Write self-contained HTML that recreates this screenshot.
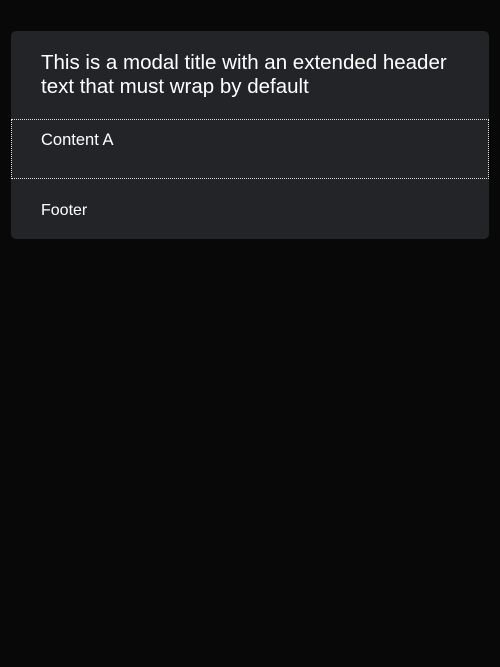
<!DOCTYPE html>
<html><head><style>
html,body{margin:0;padding:0;background:#080808;width:500px;height:667px;overflow:hidden;font-family:"Liberation Sans",sans-serif;color:#fff}
.modal{position:absolute;left:11px;top:31px;width:478px;height:208px;background:#232428;border-radius:5px;overflow:hidden}
.title{position:absolute;left:30px;top:20px;width:425px;font-size:20.5px;line-height:24px}
.content{position:absolute;left:0;top:88px;width:476px;height:58px;border:1px dotted #e0e0e0}
.content span{position:absolute;left:29px;top:11px;font-size:16.5px}
.footer{position:absolute;left:30px;top:171px;font-size:16px}
</style></head><body>
<div class="modal">
<div class="title">This is a modal title with an extended header text that must wrap by default</div>
<div class="content"><span>Content A</span></div>
<div class="footer">Footer</div>
</div>
</body></html>
